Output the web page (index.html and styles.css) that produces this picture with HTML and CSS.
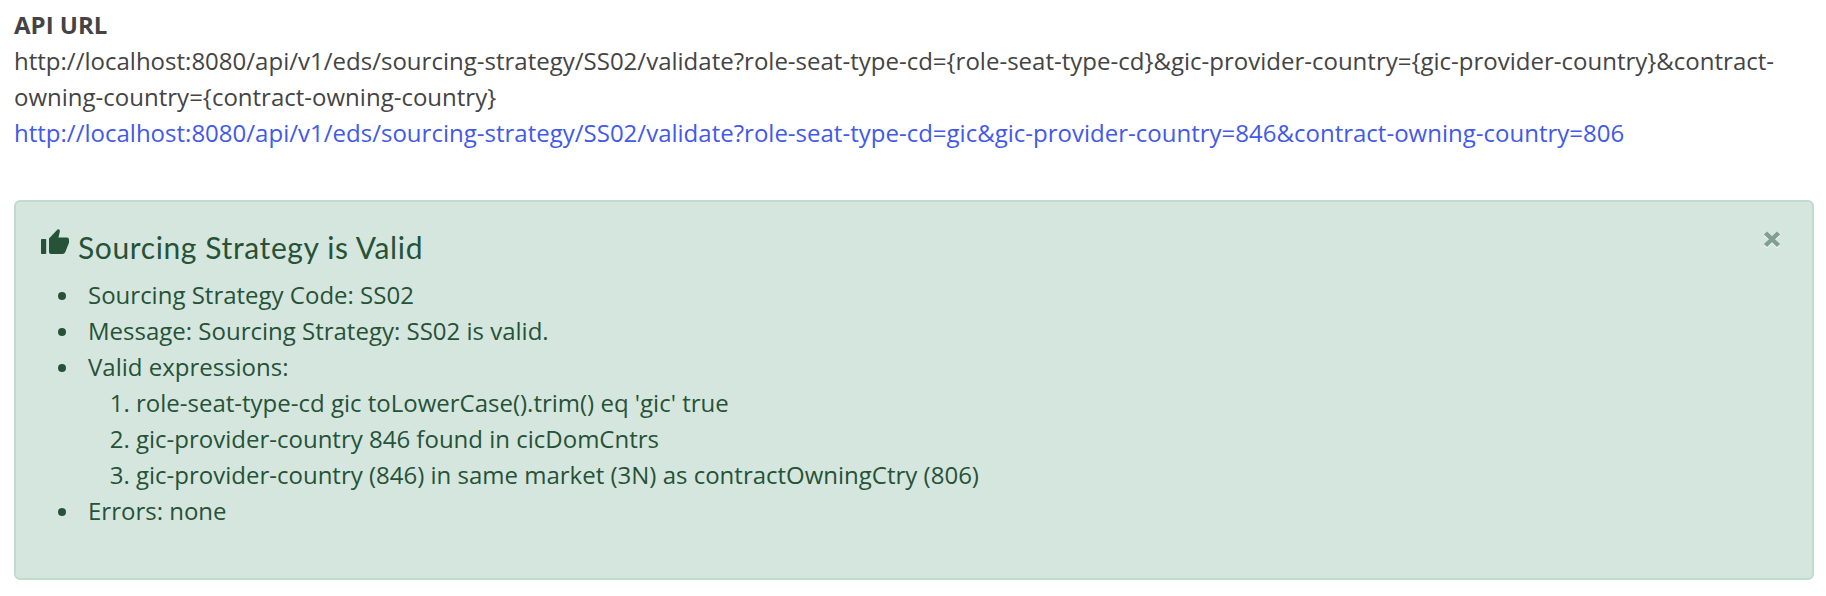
FILE: index.html
```html
<!DOCTYPE html>
<html lang="en">
<head>
<meta charset="utf-8">
<title>Sourcing Strategy</title>
<link rel="stylesheet" href="styles.css">
</head>
<body>
<section class="api">
  <strong class="api-label">API URL</strong>
  <div class="api-template">http://localhost:8080/api/v1/eds/sourcing-strategy/SS02/validate?role-seat-type-cd={role-seat-type-cd}&amp;gic-provider-country={gic-provider-country}&amp;contract-<wbr>owning-country={contract-owning-country}</div>
  <a class="api-link" href="#">http://localhost:8080/api/v1/eds/sourcing-strategy/SS02/validate?role-seat-type-cd=gic&amp;gic-provider-country=846&amp;contract-owning-country=806</a>
</section>
<section class="alert">
  <div class="alert-head">
    <svg class="thumb" viewBox="0 0 28 25"><path d="M0.7 10h3.800q.7 0 .7.7v13.600q0 .7-.7.7H.7q-.7 0-.7-.7V10.700q0-.7.7-.7z"/><path d="M8 9.600 16.500.6q.9-.9 1.700 0 .8.800.6 2L17.500 8.500H26q2 0 2 2.200v2.500q0 .7-.3 1.400l-3.500 8.600Q23.400 25 21.800 25H10q-2 0-2-2z"/></svg>
    <h4 class="alert-title">Sourcing Strategy is Valid</h4>
    <button class="close" aria-label="Close"><svg class="close-icon" viewBox="0 0 18 20"><path class="close-shade" d="M2.500 5.500 15.500 18M15.500 5.500 2.500 18"/><path class="close-mark" d="M2.500 4 15.500 16.500M15.500 4 2.500 16.500"/></svg></button>
  </div>
  <ul class="details">
    <li class="detail">Sourcing Strategy Code: SS02</li>
    <li class="detail">Message: Sourcing Strategy: SS02 is valid.</li>
    <li class="detail">Valid expressions:
      <ol class="expressions">
        <li>role-seat-type-cd gic toLowerCase().trim() eq 'gic' true</li>
        <li>gic-provider-country 846 found in cicDomCntrs</li>
        <li>gic-provider-country (846) in same market (3N) as contractOwningCtry (806)</li>
      </ol>
    </li>
    <li class="detail">Errors: none</li>
  </ul>
</section>
</body>
</html>
```
FILE: styles.css
```css
* { box-sizing: border-box; }
body {
  margin: 0;
  padding: 7px 12px 0 14px;
  background: #fff;
  color: #444;
  font: 24px/36px "Open Sans", sans-serif;
}
.api { height: 193px; letter-spacing: 0.007px; }
.api-label { display: block; font-weight: 700; }
.api-link { color: #4259ea; text-decoration: none; white-space: nowrap; }
.alert {
  height: 380px;
  padding: 24px;
  border: 2px solid #c1dbd0;
  border-radius: 6px;
  background: #d5e6de;
  color: #265237;
}
.alert-head { display: flex; height: 51px; }
.thumb { width: 28px; height: 25px; margin: 3px 10px 0 1px; fill: currentColor; }
.alert-title { margin: 3px 0 0 -1px; font: 400 30px/36px Lato, sans-serif; letter-spacing: 0.62px; }
.close { margin: 3px 7px 0 auto; padding: 0; border: 0; width: 18px; height: 20px; background: none; }
.close-icon { display: block; width: 18px; height: 20px; }
.close-icon path { fill: none; stroke-width: 4.4; }
.close-shade { stroke: #edf5f1; }
.close-mark { stroke: #809f8f; }
.details { margin: 0; padding: 0 0 0 48px; list-style: none; }
.detail::before {
  content: "";
  float: left;
  width: 8px;
  height: 8px;
  margin: 15px 0 0 -30px;
  border-radius: 50%;
  background: currentColor;
}
.expressions { margin: 0; padding: 0 0 0 48px; }
```
